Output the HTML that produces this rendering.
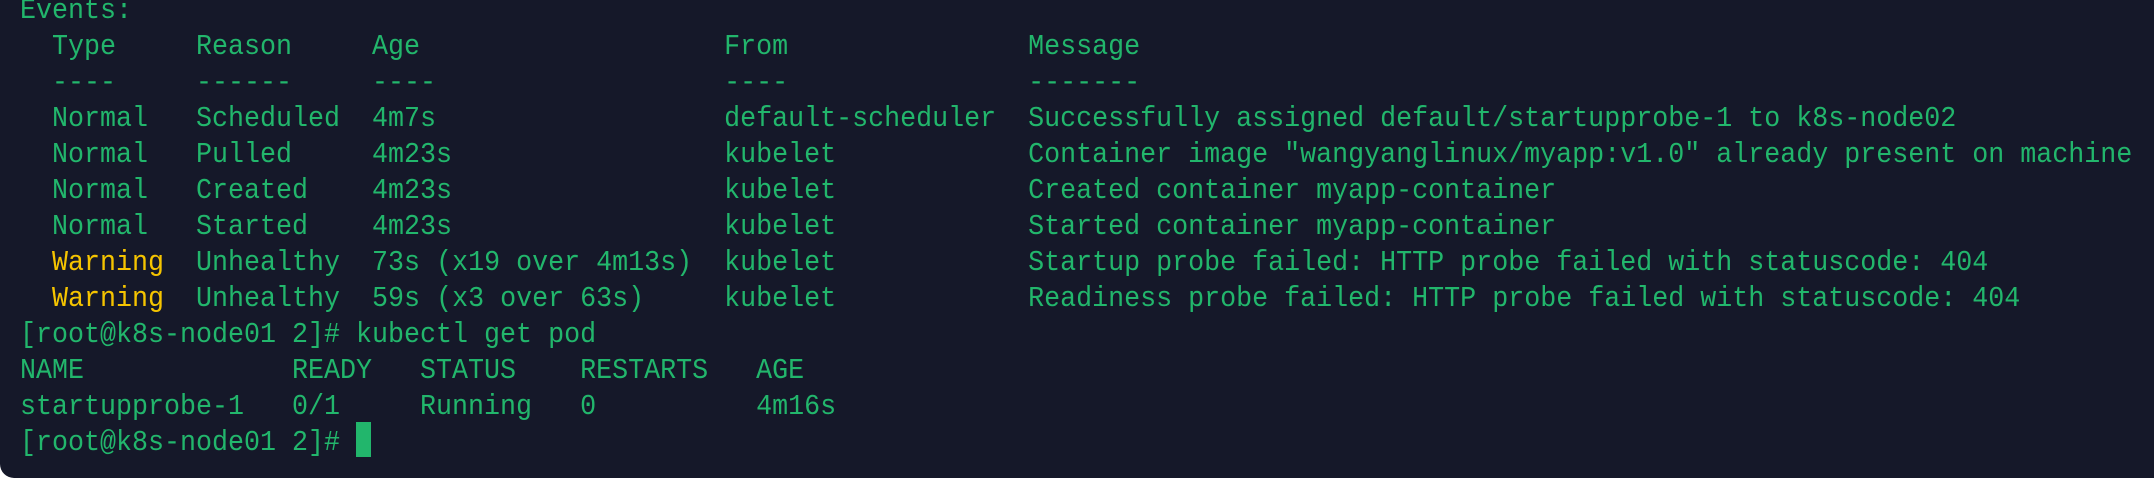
<!DOCTYPE html>
<html><head><meta charset="utf-8"><style>
html,body{margin:0;padding:0;background:#fff;}
#t{position:relative;width:2154px;height:478px;background:#151829;border-bottom-left-radius:14px;overflow:hidden;}
pre{position:absolute;left:20px;top:-7px;margin:0;font-family:"Liberation Mono",monospace;font-size:29px;line-height:36px;color:#22b66c;white-space:pre;transform:scaleX(0.9195);transform-origin:0 0;}
.y{color:#f5c400;}
#c{position:absolute;left:356px;top:422px;width:15px;height:35px;background:#22b66c;}
</style></head><body><div id="t"><pre>Events:
  Type     Reason     Age                   From               Message
  ----     ------     ----                  ----               -------
  Normal   Scheduled  4m7s                  default-scheduler  Successfully assigned default/startupprobe-1 to k8s-node02
  Normal   Pulled     4m23s                 kubelet            Container image "wangyanglinux/myapp:v1.0" already present on machine
  Normal   Created    4m23s                 kubelet            Created container myapp-container
  Normal   Started    4m23s                 kubelet            Started container myapp-container
  <span class="y">Warning</span>  Unhealthy  73s (x19 over 4m13s)  kubelet            Startup probe failed: HTTP probe failed with statuscode: 404
  <span class="y">Warning</span>  Unhealthy  59s (x3 over 63s)     kubelet            Readiness probe failed: HTTP probe failed with statuscode: 404
[root@k8s-node01 2]# kubectl get pod
NAME             READY   STATUS    RESTARTS   AGE
startupprobe-1   0/1     Running   0          4m16s
[root@k8s-node01 2]# </pre><div id="c"></div></div></body></html>
